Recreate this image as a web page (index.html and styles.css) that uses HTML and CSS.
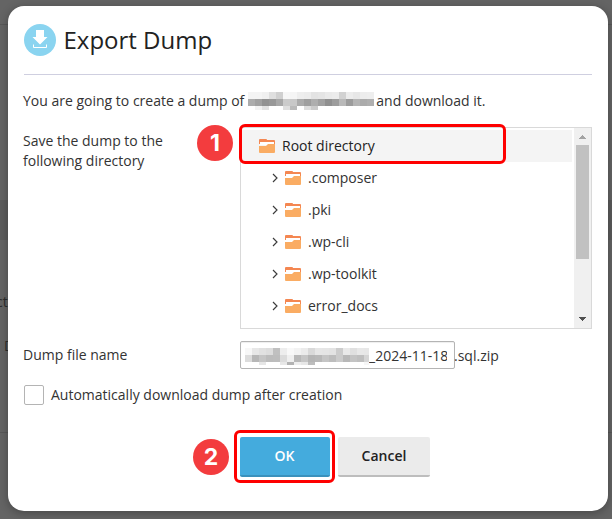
FILE: index.html
```html
<!DOCTYPE html>
<html lang="en">
<head>
<meta charset="utf-8">
<title>Export Dump</title>
<link rel="stylesheet" href="styles.css">
</head>
<body>
<svg class="defs" aria-hidden="true">
  <symbol id="folder" viewBox="0 0 16 14">
    <path fill="#f48752" d="M0 1Q0 0 1 0H7Q8 0 8 1H15Q16 1 16 2V5H0Z"/>
    <path fill="#fff" d="M1 3H15V6H1Z"/>
    <path fill="#faac63" d="M0 7H7L9 5H16V13Q16 14 15 14H1Q0 14 0 13Z"/>
  </symbol>
  <symbol id="chevron" viewBox="0 0 6 10">
    <path d="M1 1L5 5L1 9" fill="none" stroke="#3c3c3c" stroke-width="1.15"/>
  </symbol>
</svg>
<div class="page-line line-top"></div>
<div class="page-band"></div>
<div class="page-line line-bottom"></div>
<span class="page-text text-one">ct</span>
<span class="page-text text-two">D</span>

<main class="dialog">
  <header class="header">
    <svg class="logo" viewBox="0 0 32 32">
      <circle cx="16" cy="16" r="16" fill="#8ad4f0"/>
      <path fill="#fff" d="M12 6H20V13H23.5L16 20.5L8.500 13H12Z"/>
      <path d="M9.500 20.500V23.500H22.500V20.500" fill="none" stroke="#fff"/>
    </svg>
    <h1>Export Dump</h1>
  </header>
  <p class="intro"><span>You are going to create a dump of</span><svg class="mosaic mosaic-name" id="m1" width="126" height="18" shape-rendering="crispEdges"></svg><span>and download it.</span></p>
  <div class="row directory-row">
    <div class="label">Save the dump to the following directory</div>
    <div class="badge badge-one">1</div>
    <div class="tree">
      <ul class="items">
        <li class="root"><svg class="folder"><use href="#folder"/></svg><span>Root directory</span></li>
        <li><svg class="chevron"><use href="#chevron"/></svg><svg class="folder"><use href="#folder"/></svg><span>.composer</span></li>
        <li><svg class="chevron"><use href="#chevron"/></svg><svg class="folder"><use href="#folder"/></svg><span>.pki</span></li>
        <li><svg class="chevron"><use href="#chevron"/></svg><svg class="folder"><use href="#folder"/></svg><span>.wp-cli</span></li>
        <li><svg class="chevron"><use href="#chevron"/></svg><svg class="folder"><use href="#folder"/></svg><span>.wp-toolkit</span></li>
        <li><svg class="chevron"><use href="#chevron"/></svg><svg class="folder"><use href="#folder"/></svg><span>error_docs</span></li>
      </ul>
      <div class="scrollbar">
        <svg class="arrow" viewBox="0 0 7 4" shape-rendering="crispEdges"><path fill="#a3a3a3" d="M3 0H4V1H5V2H6V3H7V4H0V3H1V2H2V1H3Z"/></svg>
        <div class="thumb"></div>
        <svg class="arrow" viewBox="0 0 7 4" shape-rendering="crispEdges"><path fill="#505050" d="M0 0H7V1H6V2H5V3H4V4H3V3H2V2H1V1H0Z"/></svg>
      </div>
      <div class="ring ring-root"></div>
    </div>
  </div>
  <div class="row file-row">
    <div class="label">Dump file name</div>
    <div class="field"><svg class="mosaic" id="m2" width="124" height="17" shape-rendering="crispEdges"></svg><span class="value">_2024-11-18</span></div>
    <span class="suffix">.sql.zip</span>
  </div>
  <label class="check"><span class="box"></span><span class="check-text">Automatically download dump after creation</span></label>
  <div class="buttons">
    <div class="badge badge-two">2</div>
    <div class="ok-wrap"><button class="ok">OK</button><div class="ring ring-ok"></div></div>
    <button>Cancel</button>
  </div>
</main>
<script src="mosaic.js"></script>
</body>
</html>
```
FILE: styles.css
```css
* { box-sizing: border-box; }
body {
  margin: 0;
  height: 519px;
  padding: 6px 4px 8px 8px;
  overflow: hidden;
  background: #646464;
  color: #333;
  font: 14px/20px "Open Sans", sans-serif;
}
.defs { position: absolute; width: 0; height: 0; }
.page-line { position: absolute; left: 0; right: 0; height: 1px; background: #585858; }
.line-top { top: 24px; }
.line-bottom { top: 432px; }
.page-band { position: absolute; left: 0; right: 0; top: 200px; height: 40px; background: #5c5c5c; }
.page-text { position: absolute; color: #2d2d2d; }
.text-one { left: -4px; top: 292px; }
.text-two { left: 4px; top: 336px; }
.dialog {
  position: relative;
  width: 600px;
  height: 505px;
  padding: 16px;
  background: #fff;
  border-radius: 16px;
  box-shadow: 0 2px 10px rgba(0, 0, 0, .3);
}
.header {
  display: flex;
  gap: 8px;
  height: 53px;
  padding-top: 2px;
  border-bottom: 1px solid #cfcfe0;
}
.logo { width: 32px; height: 32px; }
h1 { margin: 0 0 0 -0.5px; color: #222; font-size: 24px; line-height: 32px; font-weight: 400; }
.intro { display: flex; margin: 16px 0 0 -1px; height: 20px; white-space: nowrap; }
.mosaic { flex: none; }
.mosaic-name { margin: 1px 2px 0 4px; }
.row { display: flex; }
.directory-row { margin-top: 16px; }
.label { flex: none; width: 173px; margin-left: -1px; padding-top: 4px; }
.badge {
  flex: none;
  width: 36px;
  height: 36px;
  border-radius: 50%;
  background: #f33c3e;
  color: #fff;
  font: bold 23px/36px Inter, sans-serif;
  text-align: center;
}
.badge-one { margin: -2px 7px 0 1px; }
.tree {
  position: relative;
  display: flex;
  width: 352px;
  height: 202px;
  border: 1px solid #d9d9d9;
}
.items { flex: 1; margin: 2px 2px 0 0; padding: 0; list-style: none; }
.items li { display: flex; align-items: center; height: 32px; padding-left: 31px; }
.items li.root { padding-left: 18px; background: #f4f4f4; color: #222; }
.folder { width: 16px; height: 14px; margin-right: 7px; }
.chevron { width: 6px; height: 10px; margin-right: 7px; }
.scrollbar {
  display: flex;
  flex-direction: column;
  align-items: center;
  width: 17px;
  padding: 7px 0;
  background: #f0f0f0;
}
.arrow { width: 7px; height: 4px; }
.thumb { width: 13px; height: 114px; margin: 6px 0 auto; background: #c1c1c1; }
.ring { position: absolute; border: 3px solid #fe0000; border-radius: 6px; }
.ring-root { left: -2px; top: -4px; width: 267px; height: 40px; }
.file-row { margin-top: 12px; height: 28px; }
.file-row .label { width: 217px; }
.suffix { margin-left: -1px; padding-top: 5px; }
.field {
  display: flex;
  width: 215px;
  height: 28px;
  padding: 6px 7px 0 4px;
  border: 1px solid #b4b4b4;
  border-radius: 2px;
  box-shadow: inset 0 1px 1px #eee;
}
.value { height: 20px; margin-top: -2px; overflow: hidden; white-space: nowrap; }
.check { display: flex; align-items: center; gap: 7px; margin-top: 16px; height: 20px; }
.box { width: 20px; height: 20px; border: 1px solid #b4b4b4; border-radius: 2px; }
.buttons { display: flex; margin: 32px 0 0 169px; }
.badge-two { margin: 2px 11px 0 0; }
button {
  width: 92px;
  height: 40px;
  padding: 0;
  border: 0;
  border-bottom: 2px solid #bdbdbd;
  border-radius: 2px;
  background: #ebebeb;
  color: #222;
  font: 600 14px/38px "Open Sans", sans-serif;
}
.ok-wrap { position: relative; margin-right: 8px; }
button.ok { width: 90px; padding-right: 1px; background: #44abdd; border-color: #3a91bc; color: #fff; }
.ring-ok { left: -6px; top: -7px; width: 101px; height: 53px; }
```
FILE: mosaic.js
```javascript
const mosaics = {
  m1: [
    ["f4", "f4", "f0", "df", "d0", "f7", "f5", "ee", "ec", "e3", "e5", "ea", "ec", "d2", "ec", "e7", "ed", "ee"],
    ["ac", "a1", "92", "98", "a8", "cb", "c8", "ab", "9e", "ae", "a1", "90", "9d", "b9", "9c", "b4", "ab", "af"],
    ["ff", "f2", "e2", "ff", "ff", "df", "ba", "ff", "dc", "cb", "ff", "ff", "ff", "ff", "ff", "ff", "ff", "ff"]
  ],
  m2: [
    ["f7", "e7", "e1", "dd", "c0", "ed", "f8", "f2", "eb", "d9", "e6", "e5", "e3", "cc", "e9", "e0", "e8", "e7"],
    ["dc", "b7", "c5", "bc", "bd", "db", "ef", "b8", "c6", "b5", "b8", "c5", "bd", "cb", "b8", "c4", "bf", "d5"],
    ["ff", "ff", "e6", "ff", "ff", "e7", "b2", "ee", "e7", "bd", "ff", "ff", "ff", "ff", "ff", "ff", "ff", "f6"]
  ]
};
for (const [id, rows] of Object.entries(mosaics)) {
  const height = id === "m1" ? 4 : 3;
  document.getElementById(id).innerHTML = rows.map((row, y) =>
    row.map((shade, x) =>
      `<rect x="${x * 7}" y="${y * 7}" width="7" height="${y === 2 ? height : 7}" fill="#${shade.repeat(3)}"/>`
    ).join("")
  ).join("");
}
```
